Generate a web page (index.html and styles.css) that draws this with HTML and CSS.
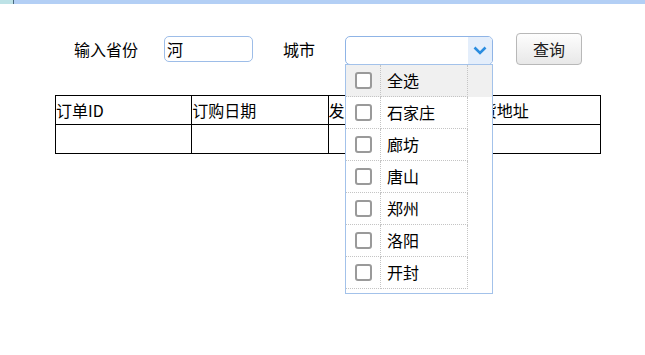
FILE: index.html
```html
<!DOCTYPE html>
<html lang="zh">
<head>
    <meta charset="UTF-8">
    <title>订单查询</title>
    <link rel="stylesheet" href="styles.css">
</head>
<body>
    <div class="topbar"><span class="tab"></span></div>
    <div class="search">
        <label class="lbl lbl-prov">输入省份</label>
        <input class="prov" type="text" value="河">
        <label class="lbl lbl-city">城市</label>
        <div class="city">
            <div class="city-box">
                <span class="city-arrow">
                    <svg width="14" height="9" viewBox="0 0 14 9"><path d="M1.5 1.5 L7 7 L12.5 1.5" fill="none" stroke="#2b8de0" stroke-width="2.6"/></svg>
                </span>
            </div>
            <div class="panel">
                <div class="opt opt-all"><span class="cb"><i></i></span><span class="nm">全选</span></div>
                <div class="opt"><span class="cb"><i></i></span><span class="nm">石家庄</span></div>
                <div class="opt"><span class="cb"><i></i></span><span class="nm">廊坊</span></div>
                <div class="opt"><span class="cb"><i></i></span><span class="nm">唐山</span></div>
                <div class="opt"><span class="cb"><i></i></span><span class="nm">郑州</span></div>
                <div class="opt"><span class="cb"><i></i></span><span class="nm">洛阳</span></div>
                <div class="opt"><span class="cb"><i></i></span><span class="nm">开封</span></div>
            </div>
        </div>
        <button class="query">查询</button>
    </div>
    <table class="orders">
        <tr>
            <th>订单ID</th>
            <th>订购日期</th>
            <th>发货日期</th>
            <th>收货地址</th>
        </tr>
        <tr>
            <td></td><td></td><td></td><td></td>
        </tr>
    </table>
</body>
</html>
```

FILE: styles.css
```css
html, body {
    min-height: 100%;
    height: 100%;
}

body {
    margin: 0;
    font-family: "Noto Sans CJK SC", "Liberation Sans", sans-serif;
    font-size: 16px;
    color: #000;
    background: #fff;
}

.topbar {
    height: 4px;
    background: #b3cff5;
    display: flex;
}

.tab {
    width: 13px;
    background: #bde2e6;
    border-right: 1px solid #4a6a80;
}

.search {
    display: flex;
    align-items: center;
    height: 32px;
    margin-top: 29px;
    padding-left: 74px;
    position: relative;
    z-index: 5;
}

.lbl {
    line-height: 20px;
}

.lbl-prov {
    width: 66px;
    margin-right: 24px;
}

.lbl-city {
    width: 34px;
    margin-right: 28px;
}

.prov {
    box-sizing: border-box;
    width: 89px;
    height: 26px;
    margin: 0 30px 0 0;
    padding: 0 2px;
    border: 1px solid #9dbde8;
    border-radius: 5px;
    font-family: inherit;
    font-size: 16px;
    line-height: 22px;
}

.city {
    position: relative;
    margin-right: 23px;
}

.city-box {
    box-sizing: border-box;
    width: 148px;
    height: 29px;
    margin-top: 3px;
    border: 1px solid #8fb4e6;
    border-radius: 5px;
    display: flex;
    justify-content: flex-end;
    overflow: hidden;
}

.city-arrow {
    width: 24px;
    background: #e4eefb;
    display: flex;
    align-items: center;
    justify-content: center;
}

.panel {
    position: absolute;
    left: 0;
    top: 31px;
    z-index: 10;
    box-sizing: border-box;
    width: 148px;
    height: 230px;
    border: 1px solid #a3c2ea;
    background: #fff;
}

.opt {
    display: flex;
    height: 32px;
}

.opt-all {
    background: #f0f0f0;
}

.cb, .nm {
    box-sizing: border-box;
    height: 32px;
    border-right: 1px dotted #c4c4c4;
    border-bottom: 1px dotted #c4c4c4;
}

.cb {
    width: 35px;
    display: flex;
    align-items: center;
    justify-content: center;
}

.cb i {
    box-sizing: border-box;
    width: 17px;
    height: 17px;
    border: 2px solid #9a9a9a;
    border-radius: 3px;
    background: #fff;
}

.nm {
    width: 87px;
    padding-left: 6px;
    line-height: 30px;
}

.query {
    box-sizing: border-box;
    width: 66px;
    height: 32px;
    border: 1px solid #b8b8b8;
    border-radius: 4px;
    background: linear-gradient(#fdfdfd, #e8e8e8);
    font-family: inherit;
    font-size: 16px;
    color: #222;
}

.orders {
    border-collapse: collapse;
    margin: 30px 0 0 55px;
    width: 546px;
    table-layout: fixed;
}

.orders th, .orders td {
    border: 1px solid #000;
    height: 28px;
    padding: 0;
    font-weight: normal;
    text-align: left;
    line-height: 20px;
}
```
